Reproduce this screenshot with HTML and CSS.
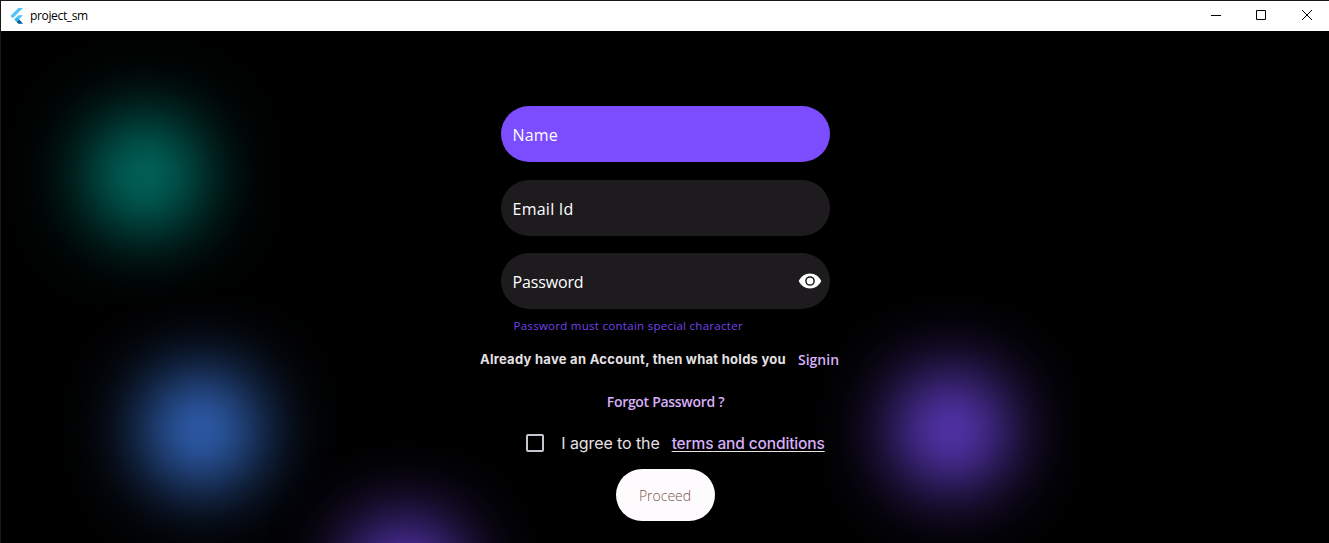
FILE: index.html
```html
<!DOCTYPE html>
<html lang="en">
<head>
<meta charset="utf-8">
<title>project_sm</title>
<link rel="stylesheet" href="styles.css">
</head>
<body>
<div class="window">
  <header class="titlebar">
    <svg class="logo" width="16" height="16" viewBox="0 0 16 16">
      <path fill="#54c5f8" d="M9.3 0H14L3.8 10.2 1.4 7.9z"/>
      <path fill="#54c5f8" d="M9.3 7.2H14L9.9 11.4 7.6 9z"/>
      <path fill="#29b6f6" d="M5.2 11.5l2.5-2.4 2.4 2.4-2.4 2.4z"/>
      <path fill="#01579b" d="M7.7 13.9l2.4-2.4 4 4.2H9.4z"/>
    </svg>
    <span class="title">project_sm</span>
    <div class="controls">
      <svg width="46" height="30" viewBox="0 0 46 30"><path d="M18 14.5h10" class="line"/></svg>
      <svg width="46" height="30" viewBox="0 0 46 30"><path d="M17.5 9.5h9v9h-9z" class="line"/></svg>
      <svg width="46" height="30" viewBox="0 0 46 30"><path d="M17 9l10 10M27 9L17 19" class="line"/></svg>
    </div>
  </header>
  <main class="screen">
    <div class="glow teal"></div>
    <div class="glow blue"></div>
    <div class="glow violet"></div>
    <div class="glow violet-low"></div>
    <form class="form">
      <div class="field active"><span class="label">Name</span></div>
      <div class="field"><span class="label email">Email Id</span></div>
      <div class="field password">
        <span class="label pass">Password</span>
        <svg class="eye" width="24" height="24" viewBox="0 0 24 24"><path fill="#fff" d="M12 4.5C7 4.5 2.73 7.61 .7 12c2.03 4.39 6.3 7.5 11.3 7.5s9.27-3.11 11.3-7.5C21.27 7.61 17 4.5 12 4.5z"/><circle cx="12" cy="12" r="4.1" fill="#fff" stroke="#1e1b1e" stroke-width="1.5"/></svg>
      </div>
      <div class="helper"><span>Password must contain special character</span></div>
      <div class="signin-row"><span class="question">Already have an Account, then what holds you</span><span class="link signin">Signin</span></div>
      <div class="forgot-row"><span class="link forgot">Forgot Password ?</span></div>
      <div class="agree-row"><span class="checkbox"></span><span class="agree">I agree to the</span><span class="terms">terms and conditions</span></div>
      <div class="proceed"><span>Proceed</span></div>
    </form>
  </main>
</div>
</body>
</html>
```
FILE: styles.css
```css
* { box-sizing: border-box; }
body { margin: 0; background: #000; overflow: hidden; font-family: "Open Sans", "Noto Sans", sans-serif; }
.window { width: 1329px; height: 543px; display: flex; flex-direction: column; border-top: 1px solid #1b181c; border-left: 1px solid #1b181c; }
.titlebar { flex: none; height: 30px; background: #fff; display: flex; align-items: center; padding-left: 8px; }
.title { margin-left: 5px; font: 12px/16px "Open Sans", sans-serif; letter-spacing: -.35px; color: #000; white-space: nowrap; }
.controls { display: flex; margin-left: auto; margin-right: -2px; }
.line { fill: none; stroke: #000; stroke-width: 1; }
.screen { flex: 1; position: relative; overflow: hidden; background: #000; }
.glow { position: absolute; width: 108px; height: 108px; border-radius: 50%; filter: blur(40px); }
.teal { left: 90px; top: 90px; background: #009688; }
.blue { left: 146px; top: 345px; background: #448aff; }
.violet { left: 896px; top: 345px; background: #7c4dff; }
.violet-low { left: 350px; top: 492px; background: #7c4dff; }
.form { position: relative; width: 380px; margin: 75px 0 0 474px; display: flex; flex-direction: column; align-items: center; white-space: nowrap; }
.field { width: 329px; height: 56px; border-radius: 28px; background: #1e1b1e; margin-bottom: 18px; padding: 2px 8px 0 12px; display: flex; align-items: center; justify-content: space-between; color: #fff; font-size: 16px; line-height: 24px; }
.field.active { background: #7c4dff; }
.field.password { margin: -1px 0 0; }
.label { letter-spacing: .15px; }
.email { letter-spacing: .25px; }
.pass { letter-spacing: -.15px; }
.eye { margin-top: -2px; }
.helper { width: 305px; height: 16px; margin-top: 9px; padding-left: 1px; color: #7443ec; font-size: 11.5px; line-height: 16px; letter-spacing: .28px; }
.signin-row { display: flex; align-items: center; gap: 12px; height: 20px; margin-top: 15px; margin-left: -11px; line-height: 20px; }
.question { color: #e6e1e5; font-family: Inter, sans-serif; font-weight: 700; font-size: 13px; letter-spacing: .27px; }
.link { color: #d8b0fa; font-weight: 600; font-size: 14px; }
.signin { padding-top: 1px; }
.forgot { letter-spacing: -.3px; }
.forgot-row { height: 20px; line-height: 20px; margin-top: 22px; padding-left: 1px; }
.agree-row { display: flex; align-items: center; height: 20px; margin-top: 22px; margin-left: 21px; font: 16px/20px Inter, sans-serif; }
.checkbox { width: 18px; height: 18px; border: 2px solid #cac4d0; border-radius: 2px; margin-right: 17px; }
.agree { color: #e6e1e5; margin-right: 12px; letter-spacing: -.1px; }
.terms { color: #d8b0fa; font-size: 15.5px; font-weight: 500; letter-spacing: -.14px; padding-top: 2px; text-decoration: underline 1px #e6e1e5; text-underline-offset: 2px; }
.proceed { width: 99px; height: 52px; margin-top: 16px; border-radius: 26px; background: #fefbff; color: #795548; display: flex; align-items: center; justify-content: center; font-size: 14px; font-weight: 300; padding-top: 1px; }
```
